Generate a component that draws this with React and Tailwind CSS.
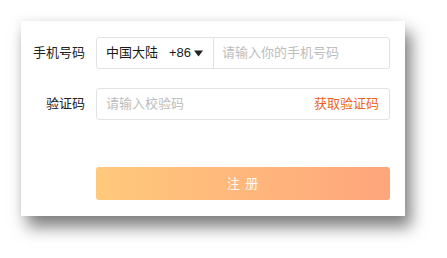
const App = () => {
  return (
    <div className="min-h-[258px] w-[447px] bg-white pl-[21px] pt-[21px] font-['Liberation_Sans','Noto_Sans_CJK_SC',sans-serif]">
      <div className="w-[384px] h-[195px] bg-white shadow-[6px_11px_15px_rgba(0,0,0,0.5),-2px_-2px_8px_rgba(0,0,0,0.05)] pt-4 pr-[15px]">
        {/* phone */}
        <div className="flex items-center">
          <label className="w-[64px] text-right text-[13px] text-[#222]">手机号码</label>
          <div className="ml-[11px] flex h-8 flex-1 items-center rounded-[3px] border border-[#e3e3e3]">
            <div className="flex h-full w-[117px] items-center border-r border-[#e3e3e3] pl-[9px] text-[13px] text-[#1a1a1a]">
              <span>中国大陆</span>
              <span className="ml-[11px]">+86</span>
              <svg width="9" height="7" viewBox="0 0 9 7" className="ml-[3px]">
                <path d="M0 0.5h9L4.5 6.5z" fill="#222" />
              </svg>
            </div>
            <span className="pl-[8px] text-[13px] text-[#bdbdbd]">请输入你的手机号码</span>
          </div>
        </div>

        {/* code */}
        <div className="mt-[19px] flex items-center">
          <label className="w-[64px] text-right text-[13px] text-[#222]">验证码</label>
          <div className="ml-[11px] flex h-8 flex-1 items-center justify-between rounded-[3px] border border-[#e3e3e3] pl-[9px] pr-[10px]">
            <span className="text-[13px] text-[#bdbdbd]">请输入校验码</span>
            <span className="text-[13px] text-[#ec6520]">获取验证码</span>
          </div>
        </div>

        {/* submit */}
        <div className="mt-[47px] flex">
          <div className="w-[75px]" />
          <button className="h-[33px] flex-1 rounded-[3px] bg-gradient-to-r from-[#ffc97b] to-[#ffa57c] text-[13px] tracking-[1px] text-white/90">
            注 册
          </button>
        </div>
      </div>
    </div>
  );
};

export default App;
